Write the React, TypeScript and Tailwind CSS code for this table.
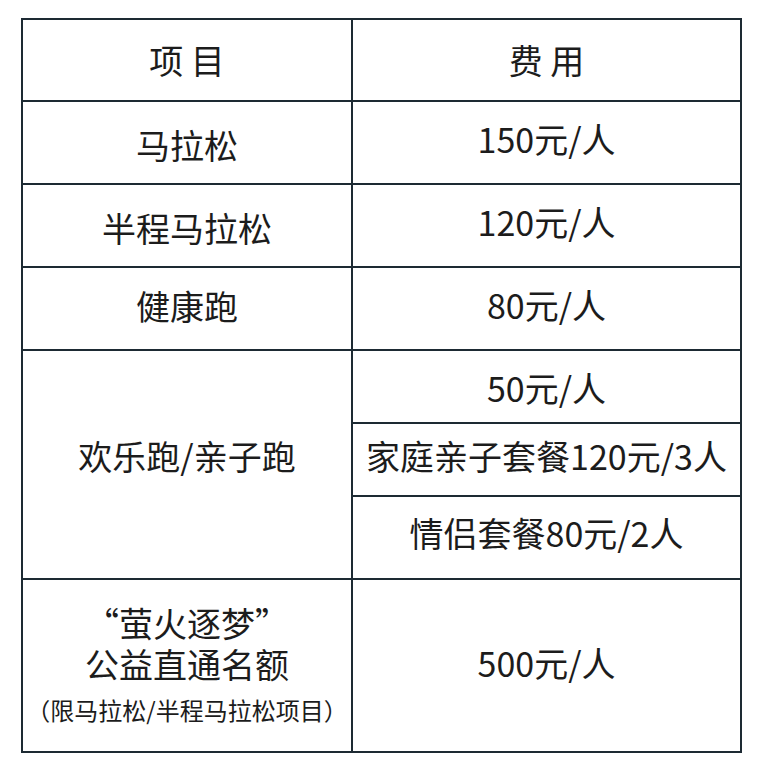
const font = { fontFamily: '"Noto Sans CJK SC", "Noto Sans", sans-serif' };

function Cell({ children, className = "" }: { children: React.ReactNode; className?: string }) {
  return (
    <div className={`flex items-center justify-center bg-white text-center text-[34px] leading-none text-[#1c1c1c] ${className}`}>
      {children}
    </div>
  );
}

export default function App() {
  return (
    <div className="min-h-[770px] w-[761px] bg-white pl-[21px] pt-[18px]" style={font}>
      <div className="grid w-[721px] grid-cols-[328px_387px] grid-rows-[80px_81px_81px_81px_71px_71px_81px_171px] gap-[2px] bg-[#1d2a33] p-[2px]">
        <Cell className="text-[33px]">项 目</Cell>
        <Cell className="text-[33px]">费 用</Cell>

        <Cell className="pt-[5px]">马拉松</Cell>
        <Cell className="pb-[7px]">150元/人</Cell>

        <Cell className="pt-[5px]">半程马拉松</Cell>
        <Cell className="pb-[8px]">120元/人</Cell>

        <Cell className="pb-[6px]">健康跑</Cell>
        <Cell className="pb-[7px]">80元/人</Cell>

        <Cell className="row-span-3 pb-[17px]">欢乐跑/亲子跑</Cell>
        <Cell className="pt-[3px]">50元/人</Cell>
        <Cell className="pb-[7px]">家庭亲子套餐120元/3人</Cell>
        <Cell className="pb-[9px]">情侣套餐80元/2人</Cell>

        <Cell className="flex-col">
          <p className="leading-[41px]">
            “萤火逐梦”
            <br />
            公益直通名额
          </p>
          <p className="mt-[6px] text-[24px] leading-[40px]">（限马拉松/半程马拉松项目）</p>
        </Cell>
        <Cell className="pb-[5px]">500元/人</Cell>
      </div>
    </div>
  );
}
